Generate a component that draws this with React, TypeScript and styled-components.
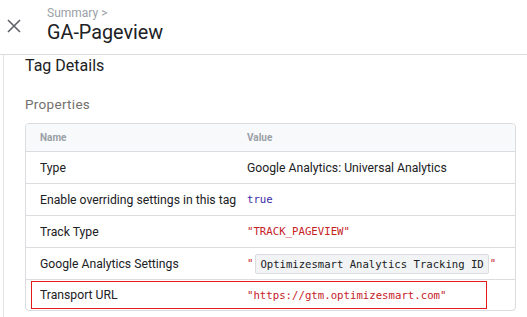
import React from "react";
import styled, { createGlobalStyle } from "styled-components";

const GlobalStyle = createGlobalStyle`
  body {
    margin: 0;
    background: #ffffff;
    font-family: Roboto, "Liberation Sans", Arial, sans-serif;
    color: #202124;
  }
`;

type Prop = {
  name: string;
  value: React.ReactNode;
  highlight?: boolean;
};

export default function App() {
  const rows: Prop[] = [
    { name: "Type", value: "Google Analytics: Universal Analytics" },
    {
      name: "Enable overriding settings in this tag",
      value: <Code $tone="keyword">true</Code>,
    },
    {
      name: "Track Type",
      value: <Code $tone="string">"TRACK_PAGEVIEW"</Code>,
    },
    {
      name: "Google Analytics Settings",
      value: (
        <>
          <Code $tone="string">"</Code>
          <Chip>Optimizesmart Analytics Tracking ID</Chip>
          <Code $tone="string">"</Code>
        </>
      ),
    },
    {
      name: "Transport URL",
      value: <Code $tone="string">"https://gtm.optimizesmart.com"</Code>,
      highlight: true,
    },
  ];

  return (
    <Page>
      <GlobalStyle />
      <Header>
        <CloseButton aria-label="Close">
          <svg width="14" height="14" viewBox="0 0 14 14">
            <path
              d="M1 1 L13 13 M13 1 L1 13"
              stroke="#5f6368"
              strokeWidth="1.6"
              fill="none"
            />
          </svg>
        </CloseButton>
        <TitleBlock>
          <Crumb>Summary &gt;</Crumb>
          <Title>GA-Pageview</Title>
        </TitleBlock>
      </Header>
      <Body>
        <SectionTitle>Tag Details</SectionTitle>
        <SubTitle>Properties</SubTitle>
        <Table>
          <HeadRow>
            <HeadCell>Name</HeadCell>
            <HeadCell>Value</HeadCell>
          </HeadRow>
          {rows.map((row) => (
            <Row key={row.name} $highlight={row.highlight}>
              <Cell>{row.name}</Cell>
              <Cell>{row.value}</Cell>
            </Row>
          ))}
        </Table>
      </Body>
    </Page>
  );
}

const Page = styled.div`
  width: 527px;
  height: 317px;
  overflow: hidden;
  display: flex;
  flex-direction: column;
`;

const Header = styled.div`
  height: 54px;
  border-bottom: 1px solid #dadce0;
  display: flex;
  align-items: flex-start;
  flex-shrink: 0;
`;

const CloseButton = styled.div`
  width: 47px;
  padding: 19px 0 0 7px;
  box-sizing: border-box;
  display: flex;
`;

const TitleBlock = styled.div`
  display: flex;
  flex-direction: column;
  padding-top: 6px;
`;

const Crumb = styled.div`
  font-size: 12px;
  line-height: 14px;
  color: #9aa0a6;
`;

const Title = styled.div`
  font-size: 19.8px;
  line-height: 25px;
  color: #202124;
`;

const Body = styled.div`
  flex: 1;
  margin-left: 3px;
  border-left: 1px solid #e3e3e3;
  padding: 1px 11px 0 21px;
`;

const SectionTitle = styled.div`
  font-size: 16px;
  line-height: 20px;
  color: #202124;
`;

const SubTitle = styled.div`
  margin-top: 20px;
  font-size: 13.5px;
  line-height: 16px;
  letter-spacing: 0.3px;
  color: #74706e;
`;

const Table = styled.div`
  margin-top: 11px;
  border: 1px solid #dadce0;
  border-radius: 4px;
  overflow: hidden;
`;

const HeadRow = styled.div`
  display: grid;
  grid-template-columns: 207px 1fr;
  height: 27px;
  align-items: center;
  background: #f8f9fa;
  border-bottom: 1px solid #dadce0;
`;

const HeadCell = styled.div`
  padding-left: 14px;
  font-size: 10px;
  font-weight: 700;
  color: #9aa0a6;
`;

const Row = styled.div<{ $highlight?: boolean }>`
  position: relative;
  display: grid;
  grid-template-columns: 207px 1fr;
  height: 31px;
  align-items: center;
  border-bottom: 1px solid #dadce0;

  &:last-child {
    border-bottom: none;
    height: 30px;
  }

  ${({ $highlight }) =>
    $highlight &&
    `
    &::after {
      content: "";
      position: absolute;
      left: 5px;
      top: 1px;
      width: 454px;
      height: 26px;
      border: 1px solid #e31b1b;
    }
  `}
`;

const Cell = styled.div`
  padding-left: 14px;
  font-size: 12.2px;
  color: #202124;
  display: flex;
  align-items: center;
  white-space: nowrap;
`;

const Code = styled.span<{ $tone: "keyword" | "string" }>`
  font-family: "DejaVu Sans Mono", "Liberation Mono", monospace;
  font-size: 10.7px;
  color: ${({ $tone }) => ($tone === "keyword" ? "#3b2ca6" : "#c5221f")};
`;

const Chip = styled.span`
  font-family: "DejaVu Sans Mono", "Liberation Mono", monospace;
  font-size: 10.6px;
  color: #202124;
  background: #f1f3f4;
  border: 1px solid #dadce0;
  border-radius: 2px;
  padding: 3px 4px;
  margin: 0 1px 0 2px;
`;
